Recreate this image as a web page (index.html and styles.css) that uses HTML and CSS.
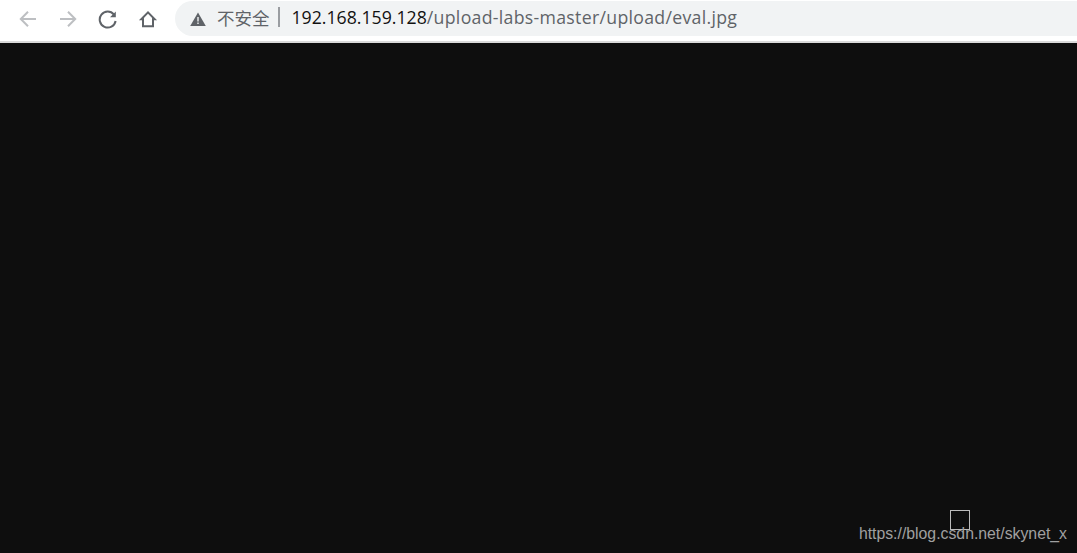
FILE: index.html
```html
<!DOCTYPE html>
<html lang="zh">
<head>
<meta charset="utf-8">
<title>eval.jpg</title>
<link rel="stylesheet" href="styles.css">
</head>
<body>
<header class="toolbar">
  <nav class="nav">
    <svg class="ico" viewBox="0 0 20 20"><path class="off" d="M18 10H3.500M10 2.800L2.800 10l7.200 7.200"/></svg>
    <svg class="ico" viewBox="0 0 20 20"><path class="off" d="M2 10H16.500M10 2.800l7.200 7.200L10 17.200"/></svg>
    <svg class="ico" viewBox="0 0 20 20"><path class="on" d="M16 5.600A8 8 0 1 0 17.600 12"/><path class="fill" d="M17.800 2.500V8.300H12z"/></svg>
    <svg class="ico" viewBox="0 0 20 20"><path class="on" d="M3.300 10.300L10 3.400l6.700 6.900h-1.700v7H5v-7z"/></svg>
  </nav>
  <div class="omnibox">
    <svg class="warn" viewBox="0 0 16 14"><path d="M8 .5L15.800 14H.2z" fill="#5f6368"/><path d="M7.300 5h1.400v4.500H7.300zM7.300 10.500h1.400V12H7.300z" fill="#f1f3f4"/></svg>
    <span class="insecure">不安全</span>
    <span class="sep"></span>
    <span class="url"><span class="host">192.168.159.128</span>/upload-labs-master/upload/eval.jpg</span>
  </div>
</header>
<main class="viewer">
  <span class="broken"></span>
  <span class="mark">https://blog.csdn.net/skynet_x</span>
</main>
</body>
</html>
```
FILE: styles.css
```css
html, body { margin: 0; height: 100%; overflow: hidden; }
body { display: flex; flex-direction: column; background: #0e0e0e; font-family: "Liberation Sans", "Noto Sans CJK SC", sans-serif; }
.toolbar { flex: none; height: 41px; display: flex; align-items: flex-start; background: #fff; border-bottom: 2px solid #dadada; }
.nav { display: flex; gap: 20px; padding: 9px 0 0 18px; width: 175px; box-sizing: border-box; flex: none; }
.ico { width: 20px; height: 20px; flex: none; }
.off, .on { fill: none; stroke-width: 2; }
.off { stroke: #bdbfc2; }
.on { stroke: #5f6368; }
.fill { fill: #5f6368; }
.omnibox { flex: 1; height: 35px; margin-top: 1px; background: #f1f3f4; border-radius: 18px 0 0 18px; display: flex; align-items: center; padding-left: 15px; font-size: 18px; white-space: nowrap; }
.warn { width: 16px; height: 14px; flex: none; }
.insecure { margin-left: 11px; margin-bottom: 3px; color: #5f6368; font-size: 17.500px; }
.sep { width: 2px; height: 20px; margin: 0 12px 3px 8px; background: #9a9da1; }
.url { color: #5f6368; font-family: "Open Sans", sans-serif; font-size: 17.700px; letter-spacing: .3px; margin-bottom: 3px; }
.host { color: #111; letter-spacing: 0; }
.viewer { flex: 1; position: relative; }
.broken { position: absolute; left: 950px; top: 467px; width: 18px; height: 18px; border: 1px solid #bbb; }
.mark { position: absolute; right: 10px; top: 482px; font-size: 15.800px; color: #a0a0a0; white-space: nowrap; }
```
